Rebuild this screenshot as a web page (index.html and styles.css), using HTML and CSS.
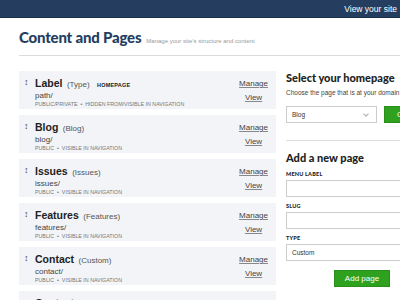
FILE: index.html
```html
<!DOCTYPE html>
<html>
<head>
<meta charset="utf-8">
<link rel="stylesheet" href="styles.css">
</head>
<body>
<div class="topbar"><a class="topbar-link">View your site</a></div>
<div class="header">
  <h1 class="title">Content and Pages</h1>
  <span class="subtitle">Manage your site’s structure and content</span>
</div>
<div class="main">
  <div class="pages">
    <div class="card">
      <span class="drag">↕</span>
      <div class="info">
        <div class="name-line"><b class="name">Label</b> <span class="type">(Type)</span> <span class="badge">HOMEPAGE</span></div>
        <div class="path">path/</div>
        <div class="meta">PUBLIC/PRIVATE &nbsp;•&nbsp; HIDDEN FROM/VISIBLE IN NAVIGATION</div>
      </div>
      <div class="actions"><a>Manage</a><a>View</a></div>
    </div>
    <div class="card">
      <span class="drag">↕</span>
      <div class="info">
        <div class="name-line"><b class="name">Blog</b> <span class="type">(Blog)</span></div>
        <div class="path">blog/</div>
        <div class="meta">PUBLIC &nbsp;•&nbsp; VISIBLE IN NAVIGATION</div>
      </div>
      <div class="actions"><a>Manage</a><a>View</a></div>
    </div>
    <div class="card">
      <span class="drag">↕</span>
      <div class="info">
        <div class="name-line"><b class="name">Issues</b> <span class="type">(Issues)</span></div>
        <div class="path">issues/</div>
        <div class="meta">PUBLIC &nbsp;•&nbsp; VISIBLE IN NAVIGATION</div>
      </div>
      <div class="actions"><a>Manage</a><a>View</a></div>
    </div>
    <div class="card">
      <span class="drag">↕</span>
      <div class="info">
        <div class="name-line"><b class="name">Features</b> <span class="type">(Features)</span></div>
        <div class="path">features/</div>
        <div class="meta">PUBLIC &nbsp;•&nbsp; VISIBLE IN NAVIGATION</div>
      </div>
      <div class="actions"><a>Manage</a><a>View</a></div>
    </div>
    <div class="card">
      <span class="drag">↕</span>
      <div class="info">
        <div class="name-line"><b class="name">Contact</b> <span class="type">(Custom)</span></div>
        <div class="path">contact/</div>
        <div class="meta">PUBLIC &nbsp;•&nbsp; VISIBLE IN NAVIGATION</div>
      </div>
      <div class="actions"><a>Manage</a><a>View</a></div>
    </div>
    <div class="card">
      <span class="drag">↕</span>
      <div class="info">
        <div class="name-line"><b class="name">Contact</b> <span class="type">(Custom)</span></div>
        <div class="path">contact/</div>
        <div class="meta">PUBLIC &nbsp;•&nbsp; VISIBLE IN NAVIGATION</div>
      </div>
      <div class="actions"><a>Manage</a><a>View</a></div>
    </div>
  </div>
  <div class="side">
    <section class="home-section">
      <h2 class="side-title">Select your homepage</h2>
      <p class="side-desc">Choose the page that is at your domain root.</p>
      <div class="select-row">
        <div class="select"><span>Blog</span><span class="chev"></span></div>
        <button class="btn btn-choose">Choose</button>
      </div>
    </section>
    <section class="add-section">
      <h2 class="side-title">Add a new page</h2>
      <label class="field-label">MENU LABEL</label>
      <div class="input"></div>
      <label class="field-label">SLUG</label>
      <div class="input"></div>
      <label class="field-label">TYPE</label>
      <div class="input"><span>Custom</span></div>
      <div class="btn-row"><button class="btn btn-add">Add page</button></div>
    </section>
  </div>
</div>
</body>
</html>
```
FILE: styles.css
```css
html, body { margin: 0; padding: 0; background: #fff; overflow: hidden; }
body { font-family: "Liberation Sans", Arial, sans-serif; color: #333; width: 400px; height: 300px; }

.topbar {
  height: 17px;
  background: #253e5f;
  border-bottom: 1px solid #1a2f4a;
  display: flex;
  justify-content: flex-end;
  align-items: center;
  padding-right: 3px;
}
.topbar-link { color: #fff; font-size: 8.5px; }

.header {
  margin: 0 0 0 19px;
  padding: 10px 0 9px;
  border-bottom: 1px solid #dcdcdc;
  display: flex;
  align-items: baseline;
  gap: 5px;
}
.title {
  margin: 0;
  font-family: Lato, "Open Sans", sans-serif;
  font-weight: 900;
  font-size: 15px;
  line-height: 18px;
  color: #253e5f;
  letter-spacing: -0.2px;
}
.subtitle { font-size: 6px; color: #999; }

.main {
  display: flex;
  gap: 10px;
  padding: 15px 0 0 19px;
}
.pages { width: 257px; flex: none; display: flex; flex-direction: column; gap: 6px; }
.card {
  background: #f2f4f7;
  height: 38px;
  box-sizing: border-box;
  display: flex;
  padding: 5px 8px 0 5px;
}
.drag { font-size: 9px; color: #444; width: 11px; line-height: 12px; font-weight: bold; }
.info { flex: 1; }
.name-line { line-height: 12px; white-space: nowrap; }
.name { font-size: 10.5px; color: #222; }
.type { font-size: 8px; color: #555; }
.badge { font-size: 5.5px; font-weight: bold; color: #222; margin-left: 3px; letter-spacing: 0.2px; }
.path { font-size: 8px; line-height: 9px; color: #444; }
.meta { font-size: 5.3px; line-height: 8px; color: #777; white-space: nowrap; }
.actions {
  display: flex;
  flex-direction: column;
  align-items: center;
  gap: 4px;
  padding-top: 3px;
}
.actions a { font-size: 8px; color: #444; text-decoration: underline; text-decoration-color: #888; line-height: 10px; }

.side { width: 130px; flex: none; }
.side-title {
  margin: 0;
  font-family: Lato, "Open Sans", sans-serif;
  font-weight: 900;
  font-size: 11px;
  color: #222;
  line-height: 14px;
}
.home-section { border-bottom: 1px solid #ddd; padding-bottom: 17px; }
.side-desc { margin: 3px 0 9px; font-size: 6.5px; line-height: 9px; color: #444; white-space: nowrap; }
.select-row { display: flex; gap: 7px; }
.select {
  width: 91px;
  height: 17px;
  box-sizing: border-box;
  border: 1px solid #ccc;
  display: flex;
  align-items: center;
  justify-content: space-between;
  padding: 0 8px 0 5px;
  font-size: 6.5px;
  color: #333;
  flex: none;
}
.chev { width: 3px; height: 3px; border-right: 1px solid #aaa; border-bottom: 1px solid #aaa; transform: rotate(45deg); margin-top: -2px; }
.btn {
  font-family: "Liberation Sans", Arial, sans-serif;
  background: #2ea21f;
  color: #fff;
  border: 1px solid #28901a;
  font-size: 8px;
  height: 17px;
  padding: 0 11px;
  flex: none;
}
.btn-choose { width: 60px; padding-left: 12px; text-align: left; }
.add-section { padding-top: 10px; }
.field-label { display: block; font-family: Lato, sans-serif; font-weight: 900; font-size: 5.5px; color: #222; margin: 6px 0 3px; letter-spacing: 0.2px; }
.input {
  width: 130px;
  height: 17px;
  box-sizing: border-box;
  border: 1px solid #ccc;
  display: flex;
  align-items: center;
  padding-left: 5px;
  font-size: 6.5px;
  color: #333;
}
.btn-row { display: flex; justify-content: flex-end; padding-top: 9px; width: 104px; }
.btn-add { width: 56px; padding: 0; text-align: center; }
```
